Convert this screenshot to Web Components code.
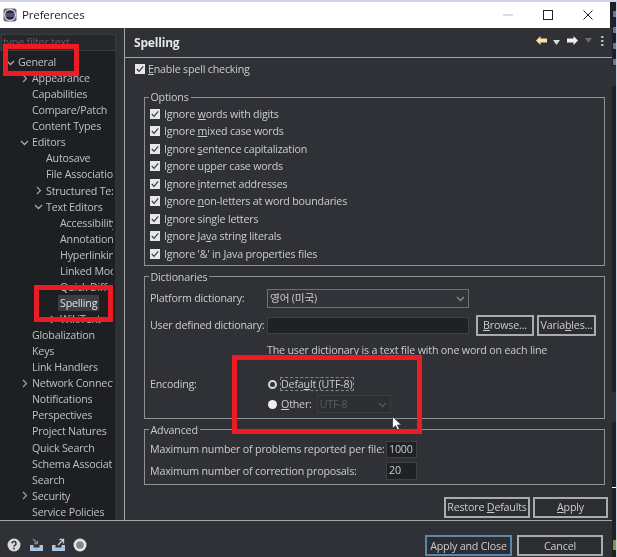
<!DOCTYPE html>
<html>
<head>
<meta charset="utf-8">
<title>Preferences</title>
<style>
  html, body { margin: 0; padding: 0; background: #1e2024; }
  body { font: 10.7px/14px "Open Sans", "Noto Sans CJK KR", sans-serif; letter-spacing: -.19px; color: #cbcccd; }
</style>
</head>
<body>
<pref-window>
  <tree-panel slot="tree">
    <tree-item arrow="down" level="0">General</tree-item>
    <tree-item arrow="right" level="1">Appearance</tree-item>
    <tree-item level="1">Capabilities</tree-item>
    <tree-item level="1">Compare/Patch</tree-item>
    <tree-item level="1">Content Types</tree-item>
    <tree-item arrow="down" level="1">Editors</tree-item>
    <tree-item level="2">Autosave</tree-item>
    <tree-item level="2">File Associations</tree-item>
    <tree-item arrow="right" level="2">Structured Text Editors</tree-item>
    <tree-item arrow="down" level="2">Text Editors</tree-item>
    <tree-item level="3">Accessibility</tree-item>
    <tree-item level="3">Annotations</tree-item>
    <tree-item level="3">Hyperlinking</tree-item>
    <tree-item level="3">Linked Mode</tree-item>
    <tree-item level="3">Quick Diff</tree-item>
    <tree-item level="3" selected>Spelling</tree-item>
    <tree-item arrow="right" level="3">WikiText</tree-item>
    <tree-item level="1">Globalization</tree-item>
    <tree-item level="1">Keys</tree-item>
    <tree-item level="1">Link Handlers</tree-item>
    <tree-item arrow="right" level="1">Network Connections</tree-item>
    <tree-item level="1">Notifications</tree-item>
    <tree-item level="1">Perspectives</tree-item>
    <tree-item level="1">Project Natures</tree-item>
    <tree-item level="1">Quick Search</tree-item>
    <tree-item level="1">Schema Associations</tree-item>
    <tree-item level="1">Search</tree-item>
    <tree-item arrow="right" level="1">Security</tree-item>
    <tree-item level="1">Service Policies</tree-item>
  </tree-panel>

  <spelling-page slot="page">
    <check-row top><u>E</u>nable spell checking</check-row>

    <group-box label="Options" class="options">
      <check-row>Ignore <u>w</u>ords with digits</check-row>
      <check-row>Ignore <u>m</u>ixed case words</check-row>
      <check-row>Ignore <u>s</u>entence capitalization</check-row>
      <check-row>Ignore u<u>p</u>per case words</check-row>
      <check-row>Ignore <u>i</u>nternet addresses</check-row>
      <check-row>Ignore <u>n</u>on-letters at word boundaries</check-row>
      <check-row>Ignore single letters</check-row>
      <check-row>Ignore Ja<u>v</u>a string literals</check-row>
      <check-row>Ignore '&amp;' in <u>J</u>ava properties files</check-row>
    </group-box>

    <group-box label="Dictionaries" class="dicts">
      <dict-form></dict-form>
    </group-box>

    <group-box label="Advanced" class="advanced">
      <advanced-form></advanced-form>
    </group-box>

    <div slot="actions">
      <push-button style="width:86px">Restore <u>D</u>efaults</push-button>
      <push-button style="width:75px"><u>A</u>pply</push-button>
    </div>
  </spelling-page>
</pref-window>

<script>
const chevron = dir => dir === 'down'
  ? '<svg width="9" height="9" viewBox="0 0 9 9"><path d="M1 3l3.5 3.5L8 3" fill="none" stroke="currentColor" stroke-width="1.3"/></svg>'
  : '<svg width="9" height="9" viewBox="0 0 9 9"><path d="M3 1l3.5 3.5L3 8" fill="none" stroke="currentColor" stroke-width="1.1"/></svg>'

customElements.define('title-bar', class extends HTMLElement {
  constructor () {
    super()
    this.attachShadow({ mode: 'open' }).innerHTML = `
      <style>
        :host { display: flex; align-items: center; height: 26px; background: #fff; color: #222; font-size: 11.6px; }
        .icon { margin-left: 3px; margin-right: 5px; }
        .name { flex: 1; }
        .ctl { width: 40px; height: 26px; display: flex; align-items: center; justify-content: center; }
        .ctl:last-child { margin-right: 2px; margin-left: 0; }
      </style>
      <svg class="icon" width="14" height="14" viewBox="0 0 14 14">
        <rect x="0.500" y="0.500" width="13" height="13" rx="2" fill="#6a6385"/>
        <circle cx="7" cy="7" r="6" fill="#dfdde8"/>
        <circle cx="7" cy="7" r="4.800" fill="#29273a"/>
        <path d="M2.500 6h9M2.500 8h9" stroke="#8d88a8" stroke-width=".9"/>
      </svg>
      <span class="name">Preferences</span>
      <span class="ctl"><svg width="10" height="10"><path d="M0 5h10" stroke="#bbb"/></svg></span>
      <span class="ctl"><svg width="10" height="10"><rect x=".5" y=".5" width="9" height="9" fill="none" stroke="#222"/></svg></span>
      <span class="ctl"><svg width="10" height="10"><path d="M.5.5l9 9M9.5.5l-9 9" stroke="#222"/></svg></span>`
  }
})

customElements.define('red-box', class extends HTMLElement {
  constructor () {
    super()
    this.attachShadow({ mode: 'open' }).innerHTML = `
      <style>:host { display: block; position: absolute; box-sizing: border-box; border: 5px solid #ed1c24; pointer-events: none; }</style>`
  }

  connectedCallback () {
    const [x, y, w, h] = this.getAttribute('rect').split(' ')
    this.style.cssText = `left:${x}px;top:${y}px;width:${w}px;height:${h}px`
  }
})

customElements.define('pref-window', class extends HTMLElement {
  constructor () {
    super()
    this.attachShadow({ mode: 'open' }).innerHTML = `
      <style>
        :host { display: block; position: relative; width: 617px; height: 557px; overflow: hidden; filter: blur(.35px); }
        .top { height: 2px; background: #ccd5e6; }
        .frame { display: flex; height: 555px; }
        .dialog { width: 612px; display: flex; flex-direction: column; background: #2f3136; }
        title-bar { margin-right: 2px; box-shadow: 2px 0 0 #1e2024; }
        .main { flex: 1; min-height: 0; display: flex; }
        .side { width: 125px; box-sizing: border-box; border-right: 1px solid #a3a5a8; flex: none; }
        .page { flex: 1; min-width: 0; }
        .foot { height: 35px; border-top: 1px solid #a3a5a8; display: flex; align-items: flex-end; padding: 0 9px 1px 7px; gap: 5px; }
        .tools { display: flex; align-items: center; gap: 7px; margin-right: auto; height: 21px; margin-bottom: 1px; }
        .strip {
          flex: 1;
          background:
            linear-gradient(#fff, #fff) 0 485px / 4px 1px no-repeat,
            linear-gradient(#8c9440, #8c9440) 1px 538px / 3px 10px no-repeat,
            linear-gradient(#5f78a8, #5f78a8) 1px 9px / 3px 6px no-repeat,
            linear-gradient(#5f78a8, #5f78a8) 1px 25px / 3px 6px no-repeat,
            linear-gradient(#5f78a8, #5f78a8) 1px 41px / 3px 6px no-repeat,
            linear-gradient(#5f78a8, #5f78a8) 1px 57px / 3px 6px no-repeat,
            linear-gradient(#2f3136, #2f3136) 0 64px / 4px 20px no-repeat,
            linear-gradient(#2f3136, #2f3136) 0 390px / 4px 30px no-repeat,
            linear-gradient(#ccd5e6, #ccd5e6) right / 1px 100% no-repeat,
            #1e2024;
        }
        .cursor { position: absolute; left: 392px; top: 416px; }
        .over { position: absolute; inset: 0; }
      </style>
      <div class="top"></div>
      <div class="frame">
        <div class="dialog">
          <title-bar></title-bar>
          <div class="main">
            <div class="side"><slot name="tree"></slot></div>
            <div class="page"><slot name="page"></slot></div>
          </div>
          <div class="foot">
            <div class="tools">
              <svg width="14" height="14" viewBox="0 0 14 14"><circle cx="7" cy="7" r="6.500" fill="#d8d9da"/><path d="M5 5.400a2 2 0 1 1 3 1.800c-.7.400-1 .8-1 1.600" fill="none" stroke="#33353a" stroke-width="1.500"/><rect x="6.200" y="9.800" width="1.600" height="1.600" fill="#33353a"/></svg>
              <svg width="15" height="14" viewBox="0 0 15 14" style="margin-left:1px"><path d="M1 7v6h13V7h-3.500v2.500h-6V7z" fill="#a9c3e0"/><path d="M4 1l4 4.500M8.500 2.500v3.200H5.200" fill="none" stroke="#6b8fb5" stroke-width="1.300"/></svg>
              <svg width="15" height="14" viewBox="0 0 15 14"><path d="M1 7v6h13V7h-3.500v2.500h-6V7z" fill="#a9c3e0"/><path d="M7 7l5-5M8.500 1.500h4v4" fill="none" stroke="#b9d0e8" stroke-width="1.300"/></svg>
              <svg width="14" height="14" viewBox="0 0 14 14"><circle cx="7" cy="7" r="6.500" fill="#e4e5e6"/><circle cx="7" cy="7" r="3.800" fill="#85868a"/></svg>
            </div>
            <push-button default style="width:87px">Apply and Close</push-button>
            <push-button style="width:86px">Cancel</push-button>
          </div>
        </div>
        <div class="strip"></div>
      </div>
      <div class="over">
        <red-box rect="3 44 76 32"></red-box>
        <red-box rect="34 285 79 37"></red-box>
        <red-box rect="232 355 190 79"></red-box>
      </div>
      <svg class="cursor" width="10" height="15" viewBox="0 0 10 15"><path d="M.5.5v12l3-2.800 2 4.300 2-1-2-4h4z" fill="#fff" stroke="#222" stroke-width=".7"/></svg>`
  }
})

customElements.define('tree-panel', class extends HTMLElement {
  constructor () {
    super()
    this.attachShadow({ mode: 'open' }).innerHTML = `
      <style>
        :host { display: block; height: 100%; }
        .filter { box-sizing: border-box; margin: 6px 8px 0 1px; height: 17px; padding-left: 1px; line-height: 15px; background: #25272b; border: 1px solid #393b3f; color: #5d5f63; overflow: hidden; white-space: nowrap; }
        .list { box-sizing: border-box; width: 115px; height: 470px; background: #1d1f23; overflow: hidden; padding-top: 3px; margin-top: 0; }
      </style>
      <div class="filter">type filter text</div>
      <div class="list"><slot></slot></div>`
  }
})

customElements.define('tree-item', class extends HTMLElement {
  constructor () {
    super()
    this.attachShadow({ mode: 'open' }).innerHTML = `
      <style>
        :host { display: flex; align-items: center; height: 16.07px; white-space: nowrap; color: #bfc0c2; width: 113px; overflow: hidden; }
        :host([selected]) { color: #e2e3e4; }
        :host([selected]) .label { background: #3b3d41; }
        .arrow { flex: none; width: 12px; height: 9px; display: flex; justify-content: center; color: #a9aaad; }
        .label { padding: 1px 2px; margin-left: -1px; }
      </style>
      <span class="arrow"></span><span class="label"><slot></slot></span>`
  }

  connectedCallback () {
    const level = Number(this.getAttribute('level') || 0)
    const arrow = this.shadowRoot.querySelector('.arrow')
    arrow.style.marginLeft = (5 + 14 * level) + 'px'
    if (this.hasAttribute('arrow')) {
      arrow.innerHTML = chevron(this.getAttribute('arrow'))
      arrow.style.transform = 'translateX(-1px)'
    }
  }
})

customElements.define('spelling-page', class extends HTMLElement {
  constructor () {
    super()
    this.attachShadow({ mode: 'open' }).innerHTML = `
      <style>
        :host { display: block; }
        .head { height: 29px; border-bottom: 1px solid #a3a5a8; display: flex; align-items: center; padding: 0 9px; }
        h2 { margin: 0; font-size: 12px; font-weight: 700; color: #e4e5e6; flex: 1; }
        .tools { display: flex; align-items: center; gap: 6px; margin-right: -1px; margin-top: -4px; }
        .body { padding: 3px 4px 0 9px; }
        ::slotted(group-box) { margin-left: 10px; margin-right: 3px; }
        ::slotted(group-box.options) { margin-top: 13px; }
        ::slotted(group-box.dicts), ::slotted(group-box.advanced) { margin-top: 4px; }
        ::slotted([slot=actions]) { display: flex; justify-content: flex-end; gap: 3px; margin-top: 12px; }
      </style>
      <div class="head">
        <h2>Spelling</h2>
        <div class="tools">
          <svg width="11" height="9" viewBox="0 0 11 9"><path d="M0 4.500L4.500 0v2.500H11v4H4.500V9z" fill="#fbe3a8"/></svg>
          <svg width="7" height="5" viewBox="0 0 7 5" style="margin-top:3px"><path d="M0 0h7L3.500 5z" fill="#dcdcdc"/></svg>
          <svg width="11" height="9" viewBox="0 0 11 9" style="margin-left:1px"><path d="M11 4.500L6.500 0v2.500H0v4h6.500V9z" fill="#f0f0f0"/></svg>
          <svg width="7" height="5" viewBox="0 0 7 5" style="margin-left:1px"><path d="M0 0h7L3.500 5z" fill="#6b6d70"/></svg>
          <svg width="3" height="10" viewBox="0 0 3 10" style="margin-left:3px"><path d="M0 0h2.500v2H0zM0 4h2.500v2H0zM0 8h2.500v2H0z" fill="#b5b6b8"/></svg>
        </div>
      </div>
      <div class="body"><slot></slot><slot name="actions"></slot></div>`
  }
})

customElements.define('group-box', class extends HTMLElement {
  constructor () {
    super()
    this.attachShadow({ mode: 'open' }).innerHTML = `
      <style>
        :host { display: block; }
        fieldset { margin: 0; border: 1px solid #8f9194; padding: 1px 5px 2px; min-width: 0; }
        legend { padding: 0 2px; margin-left: -1.500px; }
      </style>
      <fieldset><legend></legend><slot></slot></fieldset>`
  }

  connectedCallback () {
    this.shadowRoot.querySelector('legend').textContent = this.getAttribute('label')
  }
})

customElements.define('check-row', class extends HTMLElement {
  constructor () {
    super()
    this.attachShadow({ mode: 'open' }).innerHTML = `
      <style>
        :host { display: flex; align-items: center; height: 17.5px; gap: 4px; white-space: nowrap; }
        :host([top]) { height: 16px; gap: 3px; margin-left: 1px; }
        svg { flex: none; }
      </style>
      <svg width="10" height="10" viewBox="0 0 10 10"><rect width="10" height="10" fill="#e6e7e8"/><path d="M1.800 5l2.300 2.400L8.200 2.300" fill="none" stroke="#3a3c40" stroke-width="1.200"/></svg>
      <span><slot></slot></span>`
  }
})

customElements.define('push-button', class extends HTMLElement {
  constructor () {
    super()
    this.attachShadow({ mode: 'open' }).innerHTML = `
      <style>
        :host { display: flex; box-sizing: border-box; height: 21px; align-items: center; justify-content: center; border: 2px solid #a9abad; background: #2b2d31; white-space: nowrap; flex: none; }
        :host([default]) { border-color: #5b87ad; }
      </style>
      <span><slot></slot></span>`
  }
})

customElements.define('combo-box', class extends HTMLElement {
  constructor () {
    super()
    this.attachShadow({ mode: 'open' }).innerHTML = `
      <style>
        :host { display: flex; box-sizing: border-box; align-items: center; height: 19px; padding: 0 3px 0 2px; border: 1px solid #6f7174; background: #313338; white-space: nowrap; }
        :host([disabled]) { width: 74px; height: 18px; border-color: #3a3c40; background: #2c2e32; color: #5a5c60; }
        :host([disabled]) svg { color: #55575b; }
        span { flex: 1; }
        svg { color: #8a8c8f; }
      </style>
      <span><slot></slot></span>${chevron('down')}`
  }
})

customElements.define('text-field', class extends HTMLElement {
  constructor () {
    super()
    this.attachShadow({ mode: 'open' }).innerHTML = `
      <style>
        :host { display: block; box-sizing: border-box; height: 17px; line-height: 14px; padding: 0 2px; background: #1f2124; border: 1px solid #3e4044; }
        :host([tall]) { height: 18px; }
      </style>
      <slot></slot>`
  }
})

customElements.define('dict-form', class extends HTMLElement {
  constructor () {
    super()
    this.attachShadow({ mode: 'open' }).innerHTML = `
      <style>
        :host { display: grid; grid-template-columns: 117px 202px auto; row-gap: 7px; align-items: center; padding: 4px 0 1px; white-space: nowrap; }
        .btns { display: flex; gap: 3px; margin-left: 7px; }
        .note { grid-column: 2 / 4; height: 16px; line-height: 16px; margin-top: -1px; }
        .enc { grid-column: 2 / 4; margin-top: 11px; display: grid; grid-template-columns: 14px auto 1fr; align-items: center; }
        .lab { align-self: start; margin-top: 11px; line-height: 16px; }
        .radio { width: 9px; height: 9px; border-radius: 50%; box-sizing: border-box; margin-left: 1px; }
        .off { border: 2px solid #d4d5d6; }
        .on { background: #eeeeef; }
        .dash { height: 14px; line-height: 13px; box-sizing: border-box; border: 1px dashed #85878a; margin-left: -1px; padding-right: 1px; margin-top: 1px; margin-bottom: 3px; justify-self: start; }
        .other { height: 21px; display: flex; align-items: center; grid-column: 2 / 4; gap: 5px; }
      </style>
      <span>Platform dictionary:</span>
      <combo-box>영어 (미국)</combo-box>
      <span></span>
      <span>User defined dictionary:</span>
      <text-field></text-field>
      <span class="btns">
        <push-button style="width:58px"><u>B</u>rowse...</push-button>
        <push-button style="width:59px">Varia<u>b</u>les...</push-button>
      </span>
      <span></span>
      <span class="note">The user dictionary is a text file with one word on each line</span>
      <span class="lab">Encoding:</span>
      <div class="enc">
        <span class="radio off"></span>
        <span class="dash">Defa<u>u</u>lt (UTF-8)</span>
        <span></span>
        <span class="radio on"></span>
        <span class="other"><span><u>O</u>ther:</span><combo-box disabled>UTF-8</combo-box></span>
      </div>`
  }
})

customElements.define('advanced-form', class extends HTMLElement {
  constructor () {
    super()
    this.attachShadow({ mode: 'open' }).innerHTML = `
      <style>
        :host { display: grid; grid-template-columns: 236px 31px; row-gap: 4px; align-items: center; padding: 3px 0 2px; white-space: nowrap; }
      </style>
      <span>Maximum number of problems reported per file:</span>
      <text-field>1000</text-field>
      <span>Maximum number of correction proposals:</span>
      <text-field tall>20</text-field>`
  }
})
</script>
</body>
</html>
